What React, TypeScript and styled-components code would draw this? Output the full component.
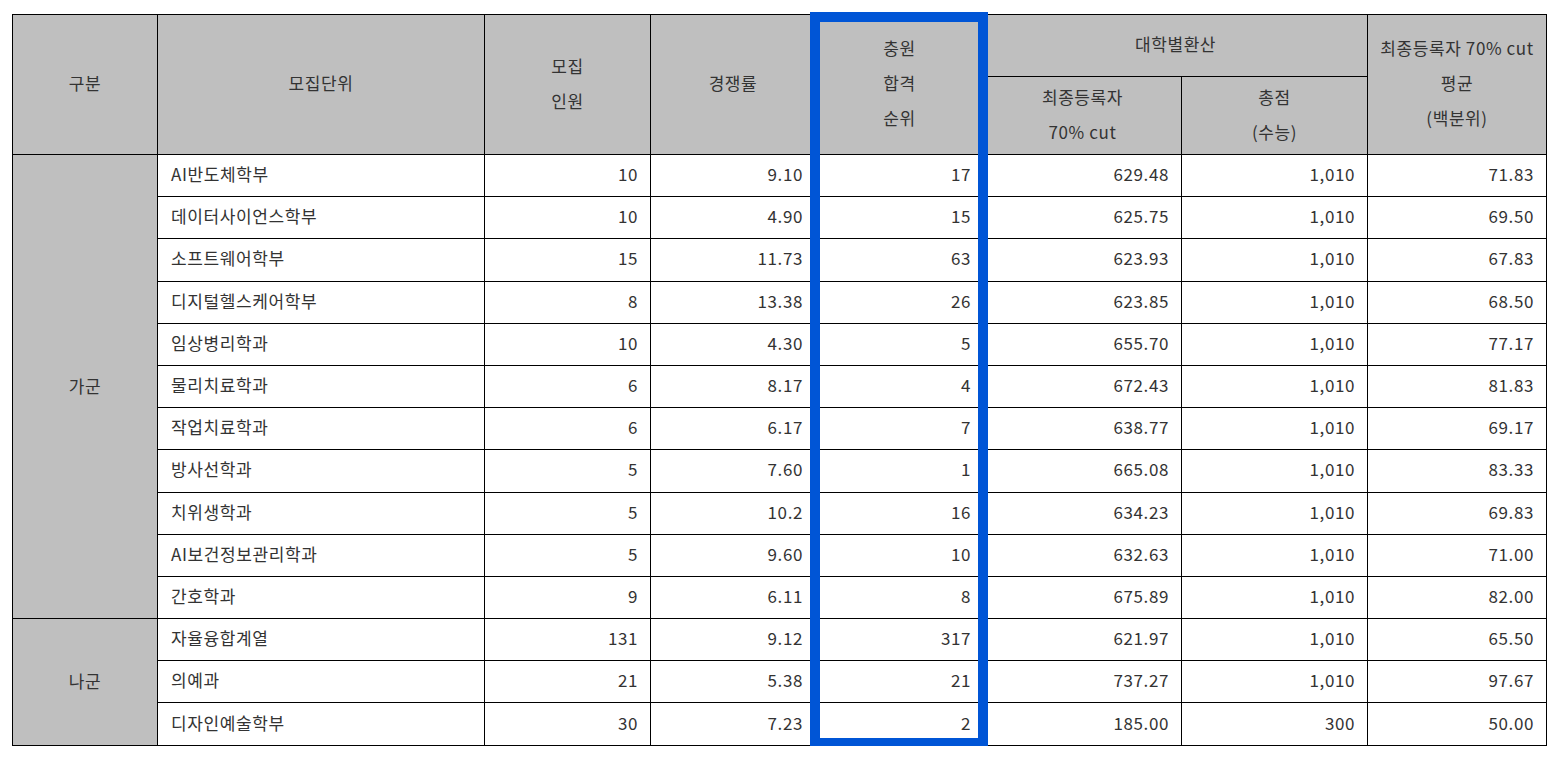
import styled, { createGlobalStyle } from 'styled-components';

const GlobalStyle = createGlobalStyle`
    html, body {
        margin: 0;
        padding: 0;
        background: #fff;
    }
    body {
        font-family: 'Noto Sans CJK KR', 'Noto Sans', sans-serif;
        color: #333;
    }
`;

const Page = styled.div`
    padding: 14px 0 0 12px;
`;

const TableWrap = styled.div`
    position: relative;
    width: 1534px;
`;

const Table = styled.table`
    width: 1534px;
    table-layout: fixed;
    border-collapse: collapse;
    font-size: 17px;
    letter-spacing: 0.6px;
    color: #333;
`;

const Th = styled.th<{ $h?: number }>`
    height: ${(p) => p.$h ?? 57}px;
    padding: 0 4px 4px;
    background: #bfbfbf;
    border: 1px solid #000;
    font-weight: 400;
    line-height: 35px;
    text-align: center;
    vertical-align: middle;
    white-space: nowrap;
`;

const GroupCell = styled.td`
    padding-bottom: 4px;
    background: #bfbfbf;
    border: 1px solid #000;
    text-align: center;
    vertical-align: middle;
`;

const NameCell = styled.td`
    height: 37.2px;
    padding: 0 0 4px 13px;
    border: 1px solid #000;
    text-align: left;
    white-space: nowrap;
`;

const NumCell = styled.td`
    padding: 0 12px 4px 0;
    border: 1px solid #000;
    text-align: right;
`;

// 충원 합격 순위 column highlight
const Highlight = styled.div`
    position: absolute;
    left: 798px;
    top: -2px;
    width: 178px;
    height: 736px;
    box-sizing: border-box;
    border: 10px solid #0055d6;
    pointer-events: none;
`;

type Row = [string, string, string, string, string, string, string];

const groups: { name: string; rows: Row[] }[] = [
    {
        name: '가군',
        rows: [
            ['AI반도체학부', '10', '9.10', '17', '629.48', '1,010', '71.83'],
            ['데이터사이언스학부', '10', '4.90', '15', '625.75', '1,010', '69.50'],
            ['소프트웨어학부', '15', '11.73', '63', '623.93', '1,010', '67.83'],
            ['디지털헬스케어학부', '8', '13.38', '26', '623.85', '1,010', '68.50'],
            ['임상병리학과', '10', '4.30', '5', '655.70', '1,010', '77.17'],
            ['물리치료학과', '6', '8.17', '4', '672.43', '1,010', '81.83'],
            ['작업치료학과', '6', '6.17', '7', '638.77', '1,010', '69.17'],
            ['방사선학과', '5', '7.60', '1', '665.08', '1,010', '83.33'],
            ['치위생학과', '5', '10.2', '16', '634.23', '1,010', '69.83'],
            ['AI보건정보관리학과', '5', '9.60', '10', '632.63', '1,010', '71.00'],
            ['간호학과', '9', '6.11', '8', '675.89', '1,010', '82.00'],
        ],
    },
    {
        name: '나군',
        rows: [
            ['자율융합계열', '131', '9.12', '317', '621.97', '1,010', '65.50'],
            ['의예과', '21', '5.38', '21', '737.27', '1,010', '97.67'],
            ['디자인예술학부', '30', '7.23', '2', '185.00', '300', '50.00'],
        ],
    },
];

const colWidths = [145, 327, 166, 165, 168, 198, 186, 179];

export default function App() {
    return (
        <Page>
            <GlobalStyle />
            <TableWrap>
                <Table>
                    <colgroup>
                        {colWidths.map((w, i) => (
                            <col key={i} style={{ width: w }} />
                        ))}
                    </colgroup>
                    <thead>
                        <tr>
                            <Th rowSpan={2}>구분</Th>
                            <Th rowSpan={2}>모집단위</Th>
                            <Th rowSpan={2}>
                                모집
                                <br />
                                인원
                            </Th>
                            <Th rowSpan={2}>경쟁률</Th>
                            <Th rowSpan={2}>
                                충원
                                <br />
                                합격
                                <br />
                                순위
                            </Th>
                            <Th colSpan={2}>대학별환산</Th>
                            <Th rowSpan={2}>
                                최종등록자 70% cut
                                <br />
                                평균
                                <br />
                                (백분위)
                            </Th>
                        </tr>
                        <tr>
                            <Th $h={73}>
                                최종등록자
                                <br />
                                70% cut
                            </Th>
                            <Th $h={73}>
                                총점
                                <br />
                                (수능)
                            </Th>
                        </tr>
                    </thead>
                    <tbody>
                        {groups.map((g) =>
                            g.rows.map((r, i) => (
                                <tr key={g.name + r[0]}>
                                    {i === 0 && <GroupCell rowSpan={g.rows.length}>{g.name}</GroupCell>}
                                    <NameCell>{r[0]}</NameCell>
                                    {r.slice(1).map((v, j) => (
                                        <NumCell key={j}>{v}</NumCell>
                                    ))}
                                </tr>
                            )),
                        )}
                    </tbody>
                </Table>
                <Highlight />
            </TableWrap>
        </Page>
    );
}
